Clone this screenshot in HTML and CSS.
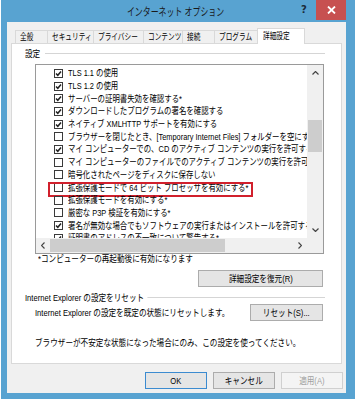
FILE: index.html
```html
<!DOCTYPE html>
<html lang="ja">
<head>
    <meta charset="UTF-8">
    <title>インターネット オプション</title>
    <link rel="stylesheet" href="styles.css">
</head>
<body>
    <div class="window">
        <div class="titlebar">
            <span class="title-spacer"></span>
            <span class="title"><span class="t c">インターネット オプション</span></span>
            <span class="help">?</span>
            <span class="close">
                <svg width="9" height="8" viewBox="0 0 9 8"><path d="M1 0.5 L8 7.5 M8 0.5 L1 7.5" stroke="#fff" stroke-width="1.8"/></svg>
            </span>
        </div>

        <div class="body">
            <div class="tabs">
                <div class="tab w1"><span class="t">全般</span></div>
                <div class="tab w2"><span class="t">セキュリティ</span></div>
                <div class="tab w3"><span class="t">プライバシー</span></div>
                <div class="tab w4"><span class="t">コンテンツ</span></div>
                <div class="tab w5"><span class="t">接続</span></div>
                <div class="tab w6"><span class="t">プログラム</span></div>
                <div class="tab w7 active"><span class="t">詳細設定</span></div>
            </div>

            <div class="panel">
                <div class="group-title first"><span class="t">設定</span></div>

                <div class="listbox">
                    <div class="list-main">
                        <div class="list-view">
                            <div class="item"><span class="check on"></span><span class="t">TLS 1.1 の使用</span></div>
                            <div class="item"><span class="check on"></span><span class="t">TLS 1.2 の使用</span></div>
                            <div class="item"><span class="check on"></span><span class="t">サーバーの証明書失効を確認する*</span></div>
                            <div class="item"><span class="check on"></span><span class="t">ダウンロードしたプログラムの署名を確認する</span></div>
                            <div class="item"><span class="check on"></span><span class="t">ネイティブ XMLHTTP サポートを有効にする</span></div>
                            <div class="item"><span class="check"></span><span class="t">ブラウザーを閉じたとき、[Temporary Internet Files] フォルダーを空にする</span></div>
                            <div class="item"><span class="check on"></span><span class="t">マイ コンピューターでの、CD のアクティブ コンテンツの実行を許可する*</span></div>
                            <div class="item"><span class="check"></span><span class="t">マイ コンピューターのファイルでのアクティブ コンテンツの実行を許可する*</span></div>
                            <div class="item"><span class="check"></span><span class="t">暗号化されたページをディスクに保存しない</span></div>
                            <div class="item"><span class="check"></span><span class="t">拡張保護モードで 64 ビット プロセッサを有効にする*</span><span class="mark"></span></div>
                            <div class="item"><span class="check"></span><span class="t">拡張保護モードを有効にする*</span></div>
                            <div class="item"><span class="check"></span><span class="t">厳密な P3P 検証を有効にする*</span></div>
                            <div class="item"><span class="check on"></span><span class="t">署名が無効な場合でもソフトウェアの実行またはインストールを許可する</span></div>
                            <div class="item"><span class="check on"></span><span class="t">証明書のアドレスの不一致について警告する*</span></div>
                        </div>
                        <div class="vscroll">
                            <span class="arrow">
                                <svg width="7" height="4" viewBox="0 0 7 4"><path d="M0.5 3.5 L3.5 0.5 L6.5 3.5" fill="none" stroke="#444" stroke-width="1.2"/></svg>
                            </span>
                            <span class="track"><span class="vthumb"></span></span>
                            <span class="arrow">
                                <svg width="7" height="4" viewBox="0 0 7 4"><path d="M0.5 0.5 L3.5 3.5 L6.5 0.5" fill="none" stroke="#444" stroke-width="1.2"/></svg>
                            </span>
                        </div>
                    </div>
                    <div class="hscroll-row">
                        <div class="hscroll">
                            <span class="arrow">
                                <svg width="4" height="7" viewBox="0 0 4 7"><path d="M3.5 0.5 L0.5 3.5 L3.5 6.5" fill="none" stroke="#444" stroke-width="1.2"/></svg>
                            </span>
                            <span class="track"><span class="hthumb"></span></span>
                            <span class="arrow">
                                <svg width="4" height="7" viewBox="0 0 4 7"><path d="M0.5 0.5 L3.5 3.5 L0.5 6.5" fill="none" stroke="#444" stroke-width="1.2"/></svg>
                            </span>
                        </div>
                        <div class="corner"></div>
                    </div>
                </div>

                <div class="note"><span class="t">*コンピューターの再起動後に有効になります</span></div>

                <div class="restore-row">
                    <button class="btn restore"><span class="t c">詳細設定を復元(R)</span></button>
                </div>

                <div class="group-title second"><span class="t">Internet Explorer の設定をリセット</span></div>

                <div class="reset-row">
                    <span class="reset-text"><span class="t">Internet Explorer の設定を既定の状態にリセットします。</span></span>
                    <button class="btn reset"><span class="t c">リセット(S)...</span></button>
                </div>

                <div class="warn"><span class="t">ブラウザーが不安定な状態になった場合にのみ、この設定を使ってください。</span></div>
            </div>

            <div class="dialog-buttons">
                <button class="btn default"><span class="t c">OK</span></button>
                <button class="btn"><span class="t c">キャンセル</span></button>
                <button class="btn disabled"><span class="t c">適用(A)</span></button>
            </div>
        </div>
    </div>
</body>
</html>
```

FILE: styles.css
```css
body {
    margin: 0;
    background: #fff;
    font-family: "Liberation Sans", "Noto Sans CJK JP", sans-serif;
    font-size: 9.5px;
    line-height: 12px;
    color: #000;
}
.t {
    display: inline-block;
    white-space: nowrap;
    transform: scaleX(0.8);
    transform-origin: 0 50%;
}
.t.c {
    transform-origin: 50% 50%;
}
.window {
    width: 354px;
    height: 399px;
    margin-left: 1px;
    padding: 0 9px 6px 6px;
    box-sizing: border-box;
    background: #58a3d1;
    display: flex;
    flex-direction: column;
}
.titlebar {
    height: 22px;
    flex: none;
    display: flex;
    align-items: flex-start;
}
.title-spacer {
    width: 47px;
}
.title {
    flex: 1;
    display: flex;
    justify-content: center;
    font-size: 11px;
    line-height: 24px;
    color: #1a1a1a;
}
.title .t {
    transform: scaleX(0.72);
}
.help {
    width: 15px;
    padding-left: 3px;
    font-family: "DejaVu Sans", sans-serif;
    font-weight: bold;
    font-size: 10px;
    line-height: 19px;
    color: #1b2b3a;
}
.close {
    width: 30px;
    height: 20px;
    background: #c75050;
    display: flex;
    align-items: center;
    justify-content: center;
}
.body {
    flex: 1;
    min-height: 0;
    background: #f0f0f0;
    padding: 6px 4px 0 4px;
    display: flex;
    flex-direction: column;
}
.tabs {
    height: 15px;
    flex: none;
    display: flex;
    align-items: flex-end;
    padding-left: 4px;
}
.tab {
    height: 13px;
    box-sizing: border-box;
    border: 1px solid #d9d9d9;
    border-bottom: none;
    margin-left: -1px;
    background: #f0f0f0;
    font-size: 9px;
    line-height: 12px;
    padding-left: 4px;
    overflow: hidden;
}
.tab .t {
    transform: scaleX(0.74);
}
.tab.active {
    height: 16px;
    margin-bottom: -1px;
    background: #fff;
    position: relative;
    z-index: 1;
    line-height: 14px;
    padding-left: 5px;
}
.w1 { width: 33px; margin-left: 0; }
.w2 { width: 47px; }
.w3 { width: 51px; }
.w4 { width: 40px; }
.w5 { width: 33px; }
.w6 { width: 44px; }
.w7 { width: 48px; }

.panel {
    height: 321px;
    flex: none;
    box-sizing: border-box;
    border: 1px solid #d9d9d9;
    background: #fff;
    display: flex;
    flex-direction: column;
}
.group-title {
    margin: 4px 16px 0 13px;
    height: 11px;
    flex: none;
    line-height: 11px;
    background: linear-gradient(#d5d5d5, #d5d5d5) 0 5px / 100% 1px no-repeat;
}
.group-title .t {
    background: #fff;
    padding-right: 4px;
}
.group-title.first .t {
    padding-right: 6px;
}
.group-title.second {
    margin-top: 5px;
}
.listbox {
    margin: 5px 0 0 23px;
    width: 289px;
    height: 190px;
    flex: none;
    box-sizing: border-box;
    border: 1px solid #9a9a9a;
    display: flex;
    flex-direction: column;
    overflow: hidden;
}
.list-main {
    height: 173px;
    flex: none;
    display: flex;
    overflow: hidden;
}
.list-view {
    flex: 1;
    overflow: hidden;
    padding-top: 2px;
}
.item {
    position: relative;
    height: 12.7px;
    display: flex;
    align-items: center;
    gap: 5px;
    padding-left: 18px;
    white-space: nowrap;
}
.item .t {
    transform: scaleX(0.78);
}
.check {
    flex: none;
    width: 9px;
    height: 9px;
    box-sizing: border-box;
    border: 1px solid #3a3a3a;
    background: #fff;
}
.check.on {
    background: #fff url("data:image/svg+xml,%3Csvg xmlns='http://www.w3.org/2000/svg' width='7' height='7' viewBox='0 0 7 7'%3E%3Cpath d='M1 3.4 L2.8 5.3 L6 1.4' fill='none' stroke='%23222' stroke-width='1.5'/%3E%3C/svg%3E") center no-repeat;
}
.mark {
    position: absolute;
    left: 12px;
    top: 1px;
    width: 205px;
    height: 15px;
    box-sizing: border-box;
    border: 2px solid #d1202c;
}
.vscroll {
    width: 16px;
    flex: none;
    background: #f0f0f0;
    display: flex;
    flex-direction: column;
}
.vscroll .arrow {
    height: 16px;
    display: flex;
    align-items: center;
    justify-content: center;
}
.vscroll .track {
    flex: 1;
    padding-top: 39px;
}
.vthumb {
    display: block;
    margin: 0 1px;
    height: 32px;
    background: #cdcdcd;
}
.hscroll-row {
    height: 15px;
    flex: none;
    display: flex;
}
.hscroll {
    flex: 1;
    background: #f0f0f0;
    display: flex;
}
.hscroll .arrow {
    width: 14px;
    display: flex;
    align-items: center;
    justify-content: center;
}
.hscroll .track {
    flex: 1;
    padding-top: 1px;
}
.hthumb {
    display: block;
    width: 175px;
    height: 13px;
    background: #cdcdcd;
}
.corner {
    width: 16px;
    background: #f0f0f0;
}
.note {
    margin-left: 26px;
    height: 10px;
    flex: none;
    line-height: 10px;
}
.restore-row {
    margin: 6px 18px 0 0;
    height: 17px;
    flex: none;
    display: flex;
    justify-content: flex-end;
}
.reset-row {
    margin: 1px 18px 0 23px;
    height: 17px;
    flex: none;
    display: flex;
    align-items: center;
}
.reset-text {
    flex: 1;
    min-width: 0;
}
.warn {
    margin: 16px 0 0 23px;
    height: 12px;
    flex: none;
}
.btn {
    flex: none;
    height: 17px;
    padding: 0;
    box-sizing: border-box;
    border: 1px solid #acacac;
    background: #e5e5e5;
    font: inherit;
    color: #000;
    line-height: 14px;
    display: flex;
    align-items: center;
    justify-content: center;
    overflow: hidden;
}
.restore {
    width: 125px;
}
.reset {
    width: 73px;
}
.dialog-buttons {
    margin-top: 8px;
    margin-right: -1px;
    flex: none;
    display: flex;
    justify-content: flex-end;
    gap: 6px;
}
.dialog-buttons .btn {
    width: 62px;
}
.btn.default {
    border-color: #3c8bd0;
}
.btn.disabled {
    background: #f4f4f4;
    border-color: #d0d0d0;
    color: #a0a0a0;
}
```
